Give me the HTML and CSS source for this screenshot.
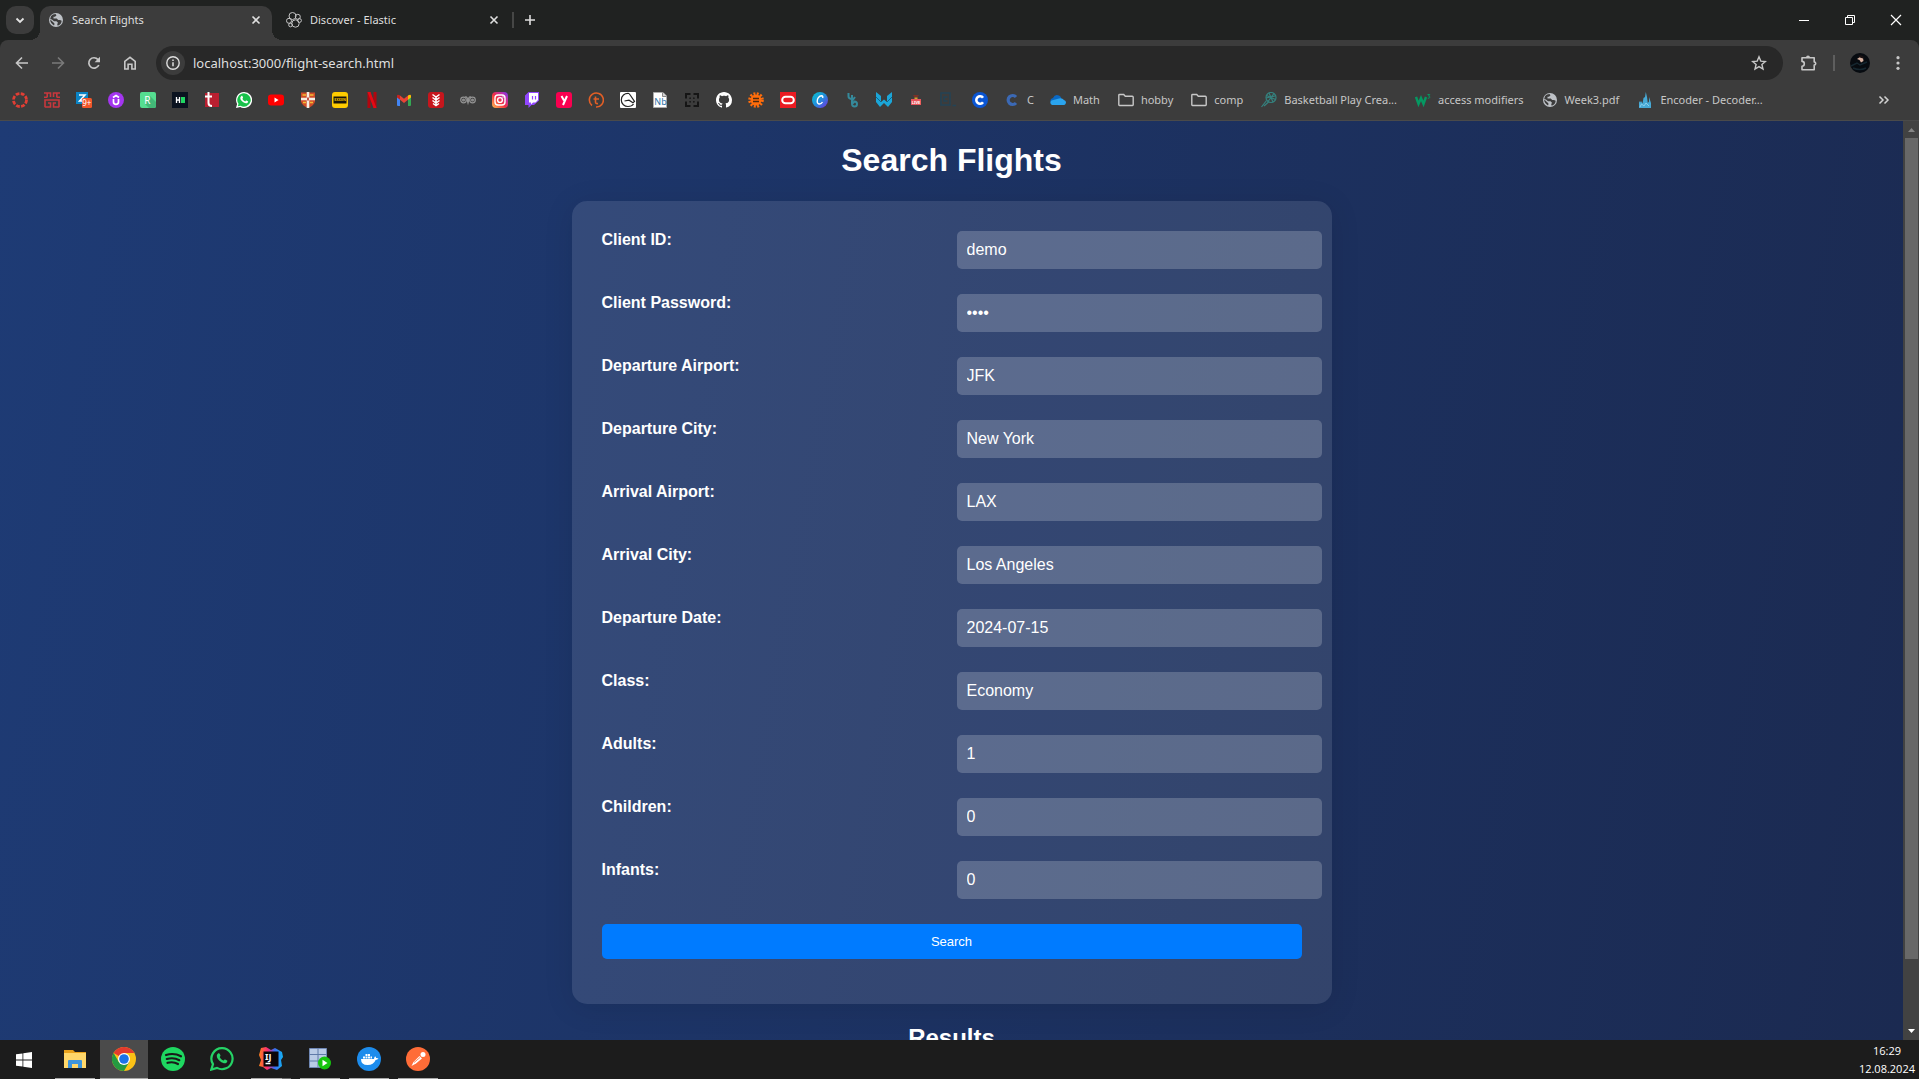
FILE: index.html
```html
<!DOCTYPE html>
<html lang="en">
<head>
<meta charset="utf-8">
<meta name="viewport" content="width=device-width, initial-scale=1">
<title>Search Flights</title>
<link rel="stylesheet" href="styles.css">
</head>
<body>
<svg class="defs" aria-hidden="true">
  <defs>
    <linearGradient id="insta" x1="0" y1="1" x2="1" y2="0"><stop offset="0" stop-color="#fec053"/><stop offset=".45" stop-color="#f2303f"/><stop offset=".75" stop-color="#c22ea8"/><stop offset="1" stop-color="#6a3cf0"/></linearGradient>
    <linearGradient id="canva" x1="0" y1="0" x2="1" y2="1"><stop offset="0" stop-color="#09c4cf"/><stop offset=".5" stop-color="#1f8fdc"/><stop offset="1" stop-color="#7b2be0"/></linearGradient>
    <linearGradient id="idea" x1="0" y1="0" x2="1" y2="0"><stop offset="0" stop-color="#fc801d"/><stop offset=".35" stop-color="#fe2b72"/><stop offset=".65" stop-color="#3b6cf0"/><stop offset="1" stop-color="#12b5f5"/></linearGradient>
    <symbol id="globe" viewBox="0 0 16 16"><circle cx="8" cy="8" r="7" fill="#bdc1c6"/><path d="M3 4.2c1.200-1.500 2.800-2.200 4.500-2.200l1 1.200-1.500 1.500H5.500v1.800h3.200l1.500 1.600 1.800-.2 1.700.9c-.2 2.500-1.700 4.300-4 5l-.5-1.600.8-1.400-1.500-1.600H6L3.900 7.500 2.200 7z" fill="#3c3c3c"/><path d="M2.200 7.500c0 2.700 1.500 4.700 3.800 5.900l.6-1.700-1.100-1.300z" fill="#3c3c3c"/></symbol>
    <symbol id="close" viewBox="0 0 16 16"><path d="M4.500 4.500l7 7M11.500 4.500l-7 7" stroke="currentColor" stroke-width="1.600"/></symbol>
    <symbol id="folder" viewBox="0 0 16 16"><path d="M.8 3.200q0-.7.700-.7h4.200l1.600 1.800h7q.9 0 .9.900v7.600q0 .7-.7.700h-13q-.7 0-.7-.7z" fill="none" stroke="#c7c7c7" stroke-width="1.400"/></symbol>
    <symbol id="phone" viewBox="0 0 16 16"><path d="M5.200 4.200c.5-.5 1.100-.4 1.300.1l.5 1.200c.1.300 0 .6-.6 1.200.7 1.400 1.600 2.200 2.900 2.700.5-.6.800-1 1.200-.8l1.400.7c.4.200.2 1-.3 1.500-1 .9-2.600.6-4.300-.5C5.500 9.100 4.300 7.600 4.300 6c0-.8.400-1.400.9-1.800z" fill="#fff"/></symbol>
  </defs>
</svg>

<header class="browser">
  <div class="tabstrip">
    <button class="tab-search" aria-label="Search tabs"><svg class="i16" viewBox="0 0 16 16"><path d="M4.500 6.500L8 10l3.500-3.500" fill="none" stroke="#e3e3e3" stroke-width="1.800"/></svg></button>
    <div class="tab tab-active">
      <svg class="i16"><use href="#globe"/></svg>
      <span class="tab-title">Search Flights</span>
      <button class="tab-close" aria-label="Close tab"><svg class="i16"><use href="#close"/></svg></button>
    </div>
    <div class="tab">
      <svg class="i16" viewBox="0 0 16 16" fill="none" stroke="#c4c4c4"><circle cx="6.500" cy="4" r="3.500"/><circle cx="11.800" cy="4.800" r="2.500"/><circle cx="3" cy="8.800" r="2.500"/><circle cx="9.500" cy="11.500" r="3.700"/><circle cx="13.500" cy="8.500" r="1.900"/><circle cx="4.500" cy="13" r="1.800"/></svg>
      <span class="tab-title">Discover - Elastic</span>
      <button class="tab-close" aria-label="Close tab"><svg class="i16"><use href="#close"/></svg></button>
    </div>
    <span class="tab-divider"></span>
    <button class="new-tab" aria-label="New tab"><svg class="i16" viewBox="0 0 16 16"><path d="M8 3v10M3 8h10" stroke="#dedede" stroke-width="1.600"/></svg></button>
    <div class="window-controls">
      <button aria-label="Minimize"><svg class="i16" viewBox="0 0 16 16"><path d="M3 8.500h10" stroke="#fff"/></svg></button>
      <button aria-label="Restore"><svg class="i16" viewBox="0 0 16 16" fill="none" stroke="#fff"><path d="M3.500 5.500h7v7h-7zM5.500 5.500v-2h7v7h-2"/></svg></button>
      <button aria-label="Close"><svg class="i16" viewBox="0 0 16 16"><path d="M3 3l10 10M13 3L3 13" stroke="#fff" stroke-width="1.200"/></svg></button>
    </div>
  </div>

  <div class="toolbar">
    <nav class="nav-buttons" aria-label="Browser">
      <button aria-label="Back"><svg class="i16" viewBox="0 0 16 16" fill="none" stroke="#c7c7c7" stroke-width="1.600"><path d="M14 8H3M8 2.500L2.500 8 8 13.500"/></svg></button>
      <button aria-label="Forward"><svg class="i16" viewBox="0 0 16 16" fill="none" stroke="#7a7a7a" stroke-width="1.600"><path d="M2 8h11M8 2.500L13.500 8 8 13.500"/></svg></button>
      <button aria-label="Reload"><svg class="i16" viewBox="0 0 16 16"><path d="M12.800 10A5.200 5.200 0 1 1 12 4.600" fill="none" stroke="#c7c7c7" stroke-width="1.700"/><path d="M14 1.800v5.400H8.600z" fill="#c7c7c7"/></svg></button>
      <button aria-label="Home"><svg class="i16" viewBox="0 0 16 16"><path d="M2.800 14V6.300L8 2.300l5.200 4V14H9.900V9.300H6.100V14z" fill="none" stroke="#c7c7c7" stroke-width="1.600"/></svg></button>
    </nav>
    <div class="address">
      <button class="site-info" aria-label="Site information"><svg class="i16" viewBox="0 0 16 16"><circle cx="8" cy="8" r="6.200" fill="none" stroke="#dedede" stroke-width="1.400"/><path d="M8 7.200v4M8 4.500v1.500" stroke="#dedede" stroke-width="1.500"/></svg></button>
      <input class="url" type="text" aria-label="Address" value="localhost:3000/flight-search.html">
      <button class="star" aria-label="Bookmark this page"><svg class="i16" viewBox="0 0 16 16"><path d="M8 1.800l1.800 4.300 4.600.4-3.500 3 1.100 4.600-4-2.500-4 2.500 1.100-4.600-3.500-3 4.600-.4z" fill="none" stroke="#c7c7c7" stroke-width="1.400"/></svg></button>
    </div>
    <div class="toolbar-end">
      <button aria-label="Extensions"><svg class="i16" viewBox="0 0 16 16"><path d="M1 2.800h12.200V7q1.500 0 1.500 1.500T13.200 10v4.800H1v-3.600q2.300 0 2.300-2.400T1 6.400z" fill="none" stroke="#c7c7c7" stroke-width="1.600" stroke-linejoin="round"/><path d="M5 2.500q0-2 2-2t2 2z" fill="#c7c7c7"/></svg></button>
      <span class="toolbar-divider"></span>
      <button class="profile" aria-label="Profile"><svg class="i20" viewBox="0 0 20 20"><circle cx="10" cy="10" r="10" fill="#070b10"/><path d="M1 13l6-3 3 2 7-3M3 15q7 3 13 0" stroke="#15262f" fill="none" stroke-width="1.500"/><path d="M7 6l3-2 3 1 .5 3-2.500 1.500L9.500 7z" fill="#d9b3a2"/><path d="M8 3q3-2 6 1l-1 1.500-3-1z" fill="#1b1314"/></svg></button>
      <button aria-label="Menu"><svg class="i16" viewBox="0 0 16 16" fill="#c7c7c7"><circle cx="8" cy="2.700" r="1.600"/><circle cx="8" cy="8" r="1.600"/><circle cx="8" cy="13.300" r="1.600"/></svg></button>
    </div>
  </div>

  <nav class="bookmarks" aria-label="Bookmarks">
    <a href="#" aria-label="Canvas"><svg class="i16" viewBox="0 0 16 16"><circle cx="8" cy="8" r="6.500" fill="none" stroke="#e03e34" stroke-width="2.800" stroke-dasharray="3.700 1.405"/></svg></a>
    <a href="#" aria-label="University"><svg class="i16" viewBox="0 0 16 16" fill="none" stroke="#c8373d" stroke-width="1.600"><path d="M0 1h6.500v4M16 1H9.500v4M3.200 1v4M12.800 1v4M0 5.200h3.500M12.500 5.200H16M1 15.200V8h14v7.200M1 15h5.500v-4H4M15 15H9.500v-4H12"/></svg></a>
    <a href="#" aria-label="Mail"><svg class="i16" viewBox="0 0 16 16"><path d="M0 0h12v12H0z" fill="#0a84c6"/><path d="M3 3h6L3.500 9H8" fill="none" stroke="#fff" stroke-width="1.500"/><rect x="6" y="6" width="10" height="10" rx="1.500" fill="#f0562a"/><text x="6.300" y="14" font-size="8" fill="#fff">9+</text></svg></a>
    <a href="#" aria-label="Udemy"><svg class="i16" viewBox="0 0 16 16"><circle cx="8" cy="8" r="8" fill="#a435f0"/><path d="M5.500 7v3q0 2.300 2.500 2.300t2.500-2.300V7M5 5.500l3-2 3 2" fill="none" stroke="#fff" stroke-width="1.700"/></svg></a>
    <a href="#" aria-label="Replit notes"><svg class="i16" viewBox="0 0 16 16"><rect width="16" height="16" rx="2" fill="#55dd90"/><path d="M10 4l6 6v4q0 2-2 2h-5l-4-4z" fill="#43b878"/><text x="4.200" y="11.500" font-size="10" fill="#fff">R</text></svg></a>
    <a href="#" aria-label="HackerRank"><svg class="i16" viewBox="0 0 16 16"><path d="M0 0h16v16H0z" fill="#0b1320"/><path d="M4.500 5v6M7.500 5v6M4.500 8h3" stroke="#fff" stroke-width="1.300"/><path d="M9 5h4v6H9z" fill="#20d761"/></svg></a>
    <a href="#" aria-label="Tureng"><svg class="i16" viewBox="0 0 16 16"><rect x="1" y="1" width="14" height="14" fill="#b91f30"/><path d="M4.500 0v11q0 3 3.500 3M1 4.500h7" fill="none" stroke="#fff" stroke-width="2"/></svg></a>
    <a href="#" aria-label="WhatsApp"><svg class="i16" viewBox="0 0 16 16"><path d="M8 0a8 8 0 1 1-3.800 15L0 16l1.100-4A8 8 0 0 1 8 0z" fill="#fff"/><path d="M8 1.300a6.700 6.700 0 1 1-3.500 12.400l-2.700.6.700-2.500A6.700 6.700 0 0 1 8 1.300z" fill="#18c14a"/><use href="#phone"/></svg></a>
    <a href="#" aria-label="YouTube"><svg class="i16" viewBox="0 0 16 16"><rect y="2.500" width="16" height="11" rx="3" fill="#f00"/><path d="M6.500 5.600v4.800L10.600 8z" fill="#fff"/></svg></a>
    <a href="#" aria-label="Cambridge"><svg class="i16" viewBox="0 0 16 16"><path d="M1 .5h14V9.500q-1 4-7 6.500Q2 13.500 1 9.500z" fill="#cf4b28"/><path d="M8 0v16M1 7h14" stroke="#f5eee4" stroke-width="2.600"/><path d="M2.500 3h3.500M10 3h3.500M3 10.500h3M10 10.500h3" stroke="#f2be34" stroke-width="1.600"/><path d="M7.200 5.500h1.600v3H7.200z" fill="#b32920"/></svg></a>
    <a href="#" aria-label="Exxen"><svg class="i16" viewBox="0 0 16 16"><rect width="16" height="16" rx="3" fill="#fc0"/><path d="M1.500 4.500h13v7h-13z" fill="#18150a"/><text x="8" y="9.300" font-size="3.500" font-weight="700" fill="#fc0" text-anchor="middle">EXXEN</text></svg></a>
    <a href="#" aria-label="Netflix"><svg class="i16" viewBox="0 0 16 16"><path d="M3.500 0h3v16h-3zM9.500 0h3v16h-3z" fill="#b1060f"/><path d="M3.500 0h3l6 16h-3z" fill="#e50914"/></svg></a>
    <a href="#" aria-label="Gmail"><svg class="i16" viewBox="0 0 16 16"><path d="M1 4l3 2.500V14H2q-1 0-1-1z" fill="#4285f4"/><path d="M15 4l-3 2.500V14h2q1 0 1-1z" fill="#34a853"/><path d="M4 3.500l4 3.200 4-3.200v4.200l-4 3.200-4-3.200z" fill="#ea4335"/><path d="M1 4q0-2 2-1l1 .5v4.200L1 5.500z" fill="#c5221f"/><path d="M15 4q0-2-2-1l-1 .5v4.200l3-2.200z" fill="#fbbc04"/></svg></a>
    <a href="#" aria-label="Recipes"><svg class="i16" viewBox="0 0 16 16"><rect width="16" height="16" rx="3" fill="#c6161d"/><path d="M8 14V5M4.500 2.500L8 5l3.500-2.500M4.500 5.500L8 8l3.500-2.500M4.500 8.500L8 11l3.500-2.500M5 11.500L8 13.500l3-2" fill="none" stroke="#fff" stroke-width="1.500"/></svg></a>
    <a href="#" aria-label="Mythology"><svg class="i16" viewBox="0 0 16 16" fill="none" stroke="#949494" stroke-width="1.200"><circle cx="3.500" cy="8" r="2.800"/><circle cx="3.500" cy="8" r=".9"/><circle cx="12.500" cy="8" r="2.800"/><circle cx="12.500" cy="8" r=".9"/><path d="M5 5q3-1 3 6q0-7 3-6M7 7.500l1 3.500 1-3.500"/></svg></a>
    <a href="#" aria-label="Instagram"><svg class="i16" viewBox="0 0 16 16"><rect width="16" height="16" rx="4" fill="url(#insta)"/><g fill="none" stroke="#fff" stroke-width="1.400"><rect x="3" y="3" width="10" height="10" rx="3"/><circle cx="8" cy="8" r="2.400"/></g><circle cx="11" cy="5" r=".7" fill="#fff"/></svg></a>
    <a href="#" aria-label="Twitch"><svg class="i16" viewBox="0 0 16 16"><path d="M4.500 0H15v8.500L10 13H7.500L4.500 16v-3H1V3.500z" fill="#9146ff"/><path d="M5 1h9v7l-2.500 2.500H9L7 12.500v-2H5z" fill="#fff"/><path d="M8.500 4v3.500M11.500 4v3.500" stroke="#9146ff" stroke-width="1.200"/></svg></a>
    <a href="#" aria-label="Yemeksepeti"><svg class="i16" viewBox="0 0 16 16"><rect width="16" height="16" rx="3" fill="#fa0050"/><path d="M5.500 4l2.500 4.500M11 4l-4 9" stroke="#fff" stroke-width="2"/></svg></a>
    <a href="#" aria-label="Trendyol"><svg class="i16" viewBox="0 0 16 16" fill="none" stroke="#e35f26" stroke-width="1.600"><path d="M4 13.500A7 7 0 1 1 8 15M7.500 4.500V10q0 2 2.500 1.500M5.500 7H11"/></svg></a>
    <a href="#" aria-label="Lichess"><svg class="i16" viewBox="0 0 16 16"><rect width="16" height="16" rx="1" fill="#fff"/><path d="M9 1.500C4.500 1 1.300 4 1.300 8s3.200 6.500 6.700 6.500c2.500 0 4.500-1 5.500-2.500M9 1.500l1.500 2 4 6-1.500 1.200-4-2.500L4.500 9" fill="none" stroke="#222" stroke-width="1.200"/></svg></a>
    <a href="#" aria-label="Notebook"><svg class="i16" viewBox="0 0 16 16"><path d="M1.500.5H11L14.500 4v11.500h-13z" fill="#fff" stroke="#ababab"/><path d="M10.500.5V4.500h4" fill="#d4d4d4" stroke="#888"/><text x="2.300" y="12.500" font-size="9" fill="#3274a8">Nb</text></svg></a>
    <a href="#" aria-label="Scanner"><svg class="i16" viewBox="0 0 16 16" fill="none" stroke="#151515" stroke-width="2"><path d="M6.500 2H2v4.500M9.500 2H14v4.500M6.500 14H2V9.500M9.500 14H14V9.500"/><path d="M6 7V6h1M10 7V6H9M6 9v1h1M10 9v1H9" stroke-width="1.200"/></svg></a>
    <a href="#" aria-label="GitHub"><svg class="i16" viewBox="0 0 16 16"><path d="M8 0C3.580 0 0 3.580 0 8c0 3.540 2.290 6.530 5.470 7.590.4.070.55-.17.55-.38 0-.19-.01-.82-.01-1.490-2.010.37-2.530-.49-2.690-.94-.09-.23-.48-.94-.82-1.130-.28-.15-.68-.52-.01-.53.63-.01 1.080.58 1.230.82.720 1.210 1.870.87 2.330.66.070-.52.280-.87.510-1.070-1.780-.2-3.640-.89-3.640-3.950 0-.87.310-1.590.82-2.150-.08-.2-.36-1.020.08-2.120 0 0 .67-.21 2.200.82.640-.18 1.320-.27 2-.27s1.360.09 2 .27c1.530-1.040 2.200-.82 2.200-.82.440 1.100.16 1.920.08 2.120.510.56.82 1.270.82 2.150 0 3.070-1.870 3.750-3.650 3.950.29.25.54.73.54 1.480 0 1.070-.01 1.930-.01 2.200 0 .21.15.46.55.38A8 8 0 0 0 16 8c0-4.420-3.580-8-8-8z" fill="#fff"/></svg></a>
    <a href="#" aria-label="Converter"><svg class="i16" viewBox="0 0 16 16"><circle cx="8" cy="8" r="5.500" fill="#ff6d0c"/><circle cx="8" cy="8" r="6.300" fill="none" stroke="#ff6d0c" stroke-width="3" stroke-dasharray="1.900 1.400"/><path d="M5 6.500h6M5 9.500h6" stroke="#4b2a10" stroke-width="1.400"/></svg></a>
    <a href="#" aria-label="Oracle"><svg class="i16" viewBox="0 0 16 16"><path d="M0 0h16v16H0z" fill="#ea1b22"/><rect x="2.200" y="4.700" width="11.600" height="6.600" rx="3.300" fill="none" stroke="#fff" stroke-width="2"/></svg></a>
    <a href="#" aria-label="Canva"><svg class="i16" viewBox="0 0 16 16"><circle cx="8" cy="8" r="8" fill="url(#canva)"/><path d="M10.500 6q1-2-1-2.200C7 3.800 5 7 5.200 9.500c.3 3.500 3.800 3 5.300.5" fill="none" stroke="#fff" stroke-width="1.400"/></svg></a>
    <a href="#" aria-label="Biteable"><svg class="i16" viewBox="0 0 16 16" fill="none" stroke="#358a9b" stroke-width="2"><path d="M4.500 1v3.500q0 2 3 2.500M8 3v8.500q0 3 2.500 3t2.500-2.500q0-2.500-2.500-2.500L8 12M8 9l3-4"/></svg></a>
    <a href="#" aria-label="Wings"><svg class="i16" viewBox="0 0 16 16"><path d="M0 0l5 4v6l3-2.500 3 2.500V4l5-4v10l-4 5-4-4-4 4-4-5z" fill="#1ba6d8"/><path d="M0 5l5 5M16 5l-5 5" stroke="#0d648e"/></svg></a>
    <a href="#" aria-label="Live"><svg class="i16" viewBox="0 0 16 16"><rect x="3" y="7" width="10" height="6" fill="#e8545b"/><text x="8" y="11.500" font-size="4" font-weight="700" fill="#fff" text-anchor="middle">LIVE</text><path d="M5 3h6L9.500 5.500h-3z" fill="#7b3028"/><path d="M6.500 5.500h3V7h-3z" fill="#d4a42c"/></svg></a>
    <a href="#" aria-label="Code"><svg class="i16" viewBox="0 0 16 16" fill="none" stroke="#234356" stroke-width="1.400"><path d="M1 1h9v12H1zM7.500 5H4v4h3.500M12.500 13.500H16"/></svg></a>
    <a href="#" aria-label="Coursera"><svg class="i16" viewBox="0 0 16 16"><circle cx="8" cy="8" r="8" fill="#0a55d3"/><path d="M11 5.800a3.700 3.700 0 1 0 0 4.400" fill="none" stroke="#fff" stroke-width="2.600"/></svg></a>
    <a href="#"><svg class="i16" viewBox="0 0 16 16"><path d="M12 5a4.500 4.500 0 1 0 0 6" fill="none" stroke="#3b69b5" stroke-width="3.200"/></svg><span>C</span></a>
    <a class="named" href="#"><svg class="i16" viewBox="0 0 16 16"><path d="M1 11q-2-4 2-5 2-4.500 6-2.500 2 1 2.500 3z" fill="#0a68c4"/><path d="M2 13q-3-2-.5-4.500L9 6.500q3-1 5 1.500 3 1 1.500 4-.8 1.300-2 1z" fill="#2aa4ee"/></svg><span>Math</span></a>
    <a class="named" href="#"><svg class="i16"><use href="#folder"/></svg><span>hobby</span></a>
    <a class="named" href="#"><svg class="i16"><use href="#folder"/></svg><span>comp</span></a>
    <a class="named" href="#"><svg class="i16" viewBox="0 0 16 16" fill="none" stroke="#35827f" stroke-width="1.200"><circle cx="10" cy="5.500" r="5"/><path d="M5.500 3.500l9 4M7 9.500l6-8M8 1l4 9M5 6l9-2M5.500 8.500L.5 15M7.500 10L3 14"/></svg><span>Basketball Play Crea...</span></a>
    <a class="named" href="#"><svg class="i16" viewBox="0 0 16 16" fill="none" stroke="#059862" stroke-width="2.400"><path d="M1 5l2.500 7L6 6l2.500 6L11 5"/><path d="M12.500 2.500h2.300l-1.300 1.500q1.500 0 1.300 1.300t-2 .9" stroke-width="1"/></svg><span>access modifiers</span></a>
    <a class="named" href="#"><svg class="i16"><use href="#globe"/></svg><span>Week3.pdf</span></a>
    <a class="named" href="#"><svg class="i16" viewBox="0 0 16 16"><path d="M2 16V9l1 1.500L4 9l1.500 2.500L6.500 6 8 5 8.800 0l1.200 5 .8 6L12 9.500V5l2 6v5z" fill="#47a9d5"/><path d="M3 15l1.500-3L7 14l2-3 3 3" stroke="#8bcfeb" fill="none"/></svg><span>Encoder - Decoder...</span></a>
    <button class="more" aria-label="More bookmarks"><svg class="i16" viewBox="0 0 16 16" fill="none" stroke="#d2d2d2" stroke-width="1.500"><path d="M3.500 4.500L7 8l-3.500 3.500M8.500 4.500L12 8l-3.500 3.500"/></svg></button>
  </nav>
</header>

<div class="viewport">
  <main class="page">
    <h1>Search Flights</h1>
    <form class="card">
      <label for="client-id">Client ID:</label><input id="client-id" type="text" value="demo">
      <label for="client-password">Client Password:</label><input id="client-password" type="password" value="demo">
      <label for="departure-airport">Departure Airport:</label><input id="departure-airport" type="text" value="JFK">
      <label for="departure-city">Departure City:</label><input id="departure-city" type="text" value="New York">
      <label for="arrival-airport">Arrival Airport:</label><input id="arrival-airport" type="text" value="LAX">
      <label for="arrival-city">Arrival City:</label><input id="arrival-city" type="text" value="Los Angeles">
      <label for="departure-date">Departure Date:</label><input id="departure-date" type="text" value="2024-07-15">
      <label for="cabin-class">Class:</label><input id="cabin-class" type="text" value="Economy">
      <label for="adults">Adults:</label><input id="adults" type="text" value="1">
      <label for="children">Children:</label><input id="children" type="text" value="0">
      <label for="infants">Infants:</label><input id="infants" type="text" value="0">
      <button class="submit" type="button">Search</button>
    </form>
    <h2>Results</h2>
  </main>
  <div class="scrollbar" aria-hidden="true">
    <svg class="i16" viewBox="0 0 16 16"><path d="M5 11l3.500-4L12 11z" fill="#858585"/></svg>
    <span class="thumb"></span>
    <svg class="i16" viewBox="0 0 16 16"><path d="M5 5h7L8.500 9z" fill="#fff"/></svg>
  </div>
</div>

<footer class="taskbar">
  <button class="start" aria-label="Start"><svg class="i16" viewBox="0 0 16 16" fill="#fff"><path d="M0 2.300L6.500 1.400v6.200H0zM7.300 1.200L16 0v7.600H7.300zM0 8.400h6.500v6.200L0 13.700zM7.300 8.400H16V16l-8.700-1.200z"/></svg></button>
  <button class="app open" aria-label="File Explorer"><svg class="i24" viewBox="0 0 24 24"><path d="M1 3h9l2 2h11v16H1z" fill="#e9a21c"/><path d="M1 6h22v15H1z" fill="#ffd76a"/><path d="M5 21v-7q0-1 1-1h12q1 0 1 1v7h-4v-4H9v4z" fill="#3d94dc"/></svg></button>
  <button class="app open current" aria-label="Chrome"><svg class="i24" viewBox="0 0 24 24"><circle cx="12" cy="12" r="12" fill="#fbc116"/><path d="M12 12L1.600 6A12 12 0 0 1 22.400 6H12z" fill="#e33b2e"/><path d="M1.600 6A12 12 0 0 0 12 24l5.200-9-10.400 0z" fill="#249a41"/><circle cx="12" cy="12" r="6" fill="#fff"/><circle cx="12" cy="12" r="4.800" fill="#1a73e8"/></svg></button>
  <button class="app" aria-label="Spotify"><svg class="i24" viewBox="0 0 24 24"><circle cx="12" cy="12" r="12" fill="#1ed760"/><path d="M5 8q8-2.500 15 1.300M5.800 12q7-2 12.500 1.200M6.500 15.800q6-1.500 10.500 1.200" fill="none" stroke="#191919" stroke-width="2.200" stroke-linecap="round"/></svg></button>
  <button class="app" aria-label="WhatsApp"><svg class="i24" viewBox="0 0 24 24"><path d="M12.300 1.200a10.500 10.500 0 1 1-5.300 19.700L1.300 22.600l1.700-5.400A10.500 10.500 0 0 1 12.300 1.200z" fill="none" stroke="#25d366" stroke-width="2.200"/><path d="M8 6.500c.7-.6 1.400-.4 1.700.2l.7 1.600c.2.500 0 .9-.7 1.600.9 1.800 2.100 3 3.900 3.700.7-.8 1-1.300 1.500-1.100l2 1c.5.300.2 1.500-.6 2.200-1.500 1.100-3.500.6-5.700-.9-2.400-1.700-4-3.800-4-5.900 0-1 .6-1.900 1.200-2.400z" fill="#25d366"/></svg></button>
  <button class="app open stacked" aria-label="IntelliJ IDEA"><svg class="i24" viewBox="0 0 24 24"><path d="M2 1l5-1 5 3 4-2 7 4 1 5-2 3 1 6-5 4-6-2-4 2-4-3-4-1 2-6-2-5z" fill="url(#idea)"/><path d="M4.500 4.500h15v15h-15z" fill="#0b0508"/><text x="6" y="12.500" font-size="9" font-weight="700" fill="#fff">IJ</text><path d="M6.500 16.500h5" stroke="#fff" stroke-width="1.500"/></svg></button>
  <button class="app open" aria-label="Database tool"><svg class="i24" viewBox="0 0 24 24"><path d="M1.500 1.500h17v19h-17z" fill="#b9cbe6" stroke="#7088b5"/><path d="M1.500 7.500h17M1.500 14h17M10 1.500v19" stroke="#5f7aa8"/><circle cx="16.500" cy="16" r="6.500" fill="#17c40f"/><path d="M14.500 12.700v6.600l5-3.300z" fill="#fff"/></svg></button>
  <button class="app open" aria-label="Docker"><svg class="i24" viewBox="0 0 24 24"><circle cx="12" cy="12" r="12" fill="#1d8cec"/><path d="M4 12h13q.3-2 1.200-2.800.9 1 .9 1.800 1.300-.2 2.400.6-1 1.400-2.900 1.400-2 5-8 5-6.600 0-6.600-6z" fill="#fff"/><path d="M6 10.500h9M8.500 8h4.500" stroke="#fff" stroke-width="2" stroke-dasharray="2 .5"/></svg></button>
  <button class="app open" aria-label="Postman"><svg class="i24" viewBox="0 0 24 24"><circle cx="12" cy="12" r="12" fill="#ff6c37"/><path d="M5.500 19l2-4 6-6 2.500 2.500-6 5z" fill="#fff"/><circle cx="17" cy="7.500" r="2.500" fill="#fff"/><path d="M8 15.500l6-5" stroke="#ff6c37" stroke-width=".8"/></svg></button>
  <div class="clock"><time>16:29</time><time>12.08.2024</time></div>
</footer>
</body>
</html>
```
FILE: styles.css
```css
* {
  box-sizing: border-box;
}

body {
  margin: 0;
  height: 100vh;
  display: flex;
  flex-direction: column;
  overflow: hidden;
  background: #202221;
  font: 12px/16px "Noto Sans", "Open Sans", sans-serif;
  color: #dfdfdf;
}

button {
  display: flex;
  align-items: center;
  justify-content: center;
  padding: 0;
  border: 0;
  background: none;
  color: inherit;
  font: inherit;
}

svg {
  display: block;
  flex: none;
}

.defs {
  position: absolute;
  width: 0;
  height: 0;
}

.i16 {
  width: 16px;
  height: 16px;
}

.i20 {
  width: 20px;
  height: 20px;
}

.i24 {
  width: 24px;
  height: 24px;
}

/* Browser frame */
.browser {
  flex: none;
}

.tabstrip {
  display: flex;
  align-items: center;
  height: 40px;
  padding-left: 6px;
}

.tab-search {
  width: 28px;
  height: 28px;
  margin-right: 6px;
  border-radius: 10px;
  background: #3c3c3c;
}

.tab {
  display: flex;
  align-items: center;
  align-self: flex-end;
  gap: 8px;
  width: 232px;
  height: 34px;
  padding: 0 8px 6px;
}

.tab + .tab {
  width: 240px;
  padding-left: 14px;
  padding-right: 10px;
}

.tab-active {
  position: relative;
  border-radius: 10px 10px 0 0;
  background: #3c3c3c;
}

.tab-active::before,
.tab-active::after {
  content: "";
  position: absolute;
  bottom: 0;
  width: 10px;
  height: 10px;
}

.tab-active::before {
  right: 100%;
  background: radial-gradient(circle at 0 0, transparent 10px, #3c3c3c 10px);
}

.tab-active::after {
  left: 100%;
  background: radial-gradient(circle at 100% 0, transparent 10px, #3c3c3c 10px);
}

.tab-title {
  flex: 1;
  font-size: 11px;
}

.tab-divider {
  width: 2px;
  height: 16px;
  background: #464746;
}

.new-tab {
  width: 32px;
  height: 28px;
}

.window-controls {
  display: flex;
  margin-left: auto;
}

.window-controls button {
  width: 46px;
  height: 40px;
}

.toolbar {
  display: flex;
  align-items: center;
  gap: 12px;
  height: 46px;
  padding: 0 7px 0 8px;
  border-radius: 8px 8px 0 0;
  background: #3c3c3c;
}

.nav-buttons {
  display: flex;
  gap: 8px;
}

.nav-buttons button,
.toolbar-end button {
  width: 28px;
  height: 28px;
}

.toolbar-end .profile {
  margin-left: 1px;
}

.address {
  flex: 1;
  display: flex;
  align-items: center;
  height: 34px;
  padding: 0 16px 0 5px;
  border-radius: 17px;
  background: #282828;
}

.site-info {
  width: 24px;
  height: 24px;
  border-radius: 12px;
  background: #3c3c3c;
}

.url {
  flex: 1;
  min-width: 0;
  padding: 0 8px;
  border: 0;
  outline: 0;
  background: none;
  color: #dfdfdf;
  font: 13px/20px "Noto Sans", "Open Sans", sans-serif;
}

.toolbar-end {
  display: flex;
  align-items: center;
  gap: 10px;
}

.toolbar-divider {
  width: 2px;
  height: 16px;
  background: #5e5e5e;
}

.bookmarks {
  display: flex;
  align-items: center;
  gap: 16px;
  height: 35px;
  padding: 0 27px 6px 12px;
  border-bottom: 1px solid #4a4a4a;
  background: #3c3c3c;
  overflow: hidden;
}

.bookmarks a {
  display: flex;
  flex: none;
  align-items: center;
  gap: 7px;
  color: #c7c7c7;
  font-size: 11px;
  text-decoration: none;
  white-space: nowrap;
}

.bookmarks .named {
  padding-right: 2px;
}

.more {
  margin-left: auto;
}

/* Web page */
.viewport {
  flex: 1;
  display: flex;
  min-height: 0;
}

.page {
  flex: 1;
  min-width: 0;
  padding: 21px 20px 20px;
  overflow: hidden;
  background: linear-gradient(100deg, #1e3b75, #1b2a51);
  color: #fff;
  font-family: "Liberation Sans", Arial, sans-serif;
}

.page h1 {
  margin: 0 0 22px;
  font-size: 32px;
  line-height: 37px;
  text-align: center;
}

.page h2 {
  margin: 20px 0;
  font-size: 24px;
  line-height: 27px;
  text-align: center;
}

.card {
  display: grid;
  grid-template-columns: 1fr 1fr;
  column-gap: 10px;
  row-gap: 25px;
  max-width: 760px;
  margin: 0 auto;
  padding: 30px 30px 45px;
  border-radius: 15px;
  background: rgba(255, 255, 255, 0.1);
  box-shadow: 0 4px 30px rgba(0, 0, 0, 0.1);
}

.card label {
  font-size: 16px;
  font-weight: 700;
  line-height: 18px;
}

.card input {
  width: calc(100% + 20px);
  height: 38px;
  padding: 10px;
  border: 0;
  border-radius: 5px;
  outline: 0;
  background: rgba(255, 255, 255, 0.2);
  color: #fff;
  font: 16px/18px "Liberation Sans", Arial, sans-serif;
}

.submit {
  grid-column: 1 / -1;
  height: 35px;
  border-radius: 5px;
  background: #007bff;
  color: #fff;
  font: 13px/15px "Liberation Sans", Arial, sans-serif;
}

.scrollbar {
  display: flex;
  flex-direction: column;
  align-items: center;
  width: 16px;
  background: #424242;
}

.thumb {
  flex: 0 1 821px;
  width: 13px;
  margin-top: 1px;
  background: #686868;
}

.scrollbar svg:last-child {
  margin-top: auto;
}

/* Taskbar */
.taskbar {
  flex: none;
  display: flex;
  gap: 1px;
  height: 39px;
  background: #1c1c1c;
}

.start {
  width: 48px;
  margin-right: 2px;
}

.app {
  width: 48px;
  border-bottom: 1px solid transparent;
}

.open {
  background: linear-gradient(#a9a9a9, #a9a9a9) center bottom / 40px 1px no-repeat;
  background-origin: border-box;
  background-clip: border-box;
}

.current {
  background-color: #4b4b4b;
  background-size: 48px 1px;
}

.stacked {
  background-image: linear-gradient(90deg, #a9a9a9 31px, #6b6b6b 31px);
}

.clock {
  display: flex;
  flex-direction: column;
  align-items: center;
  justify-content: center;
  margin-left: auto;
  padding-right: 4px;
  color: #fff;
  font: 11px/18px "Open Sans", "Noto Sans", sans-serif;
}
```
